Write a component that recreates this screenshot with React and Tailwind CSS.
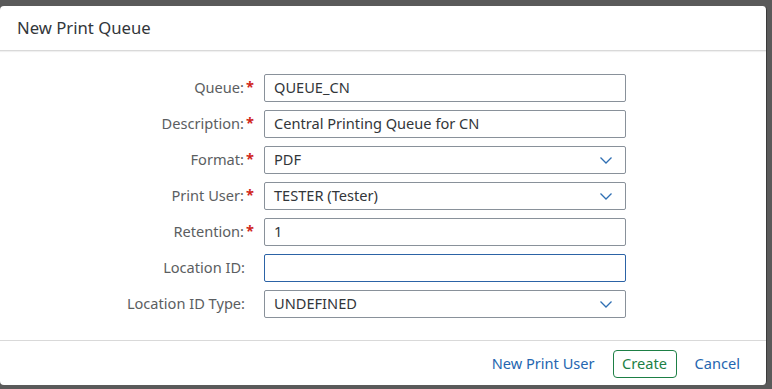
import React from "react";

function Chevron() {
  return (
    <svg width="14" height="10" viewBox="0 0 14 10" className="shrink-0">
      <path d="M1.5 2.5 L7 8 L12.5 2.5" fill="none" stroke="#2f6fb3" strokeWidth="1.3" />
    </svg>
  );
}

function Row({ label, req, value, select, focus }) {
  return (
    <div className="flex items-center h-[28px]">
      <div className="w-[264px] flex justify-end items-center pr-[10px]">
        <span className="text-[#5b5e61]">{label}</span>
        {req ? (
          <span className="text-[#d0271d] font-bold w-[9px] text-right leading-none ml-[1px] -mt-[3px]">*</span>
        ) : (
          <span className="w-[9px]" />
        )}
      </div>
      <div
        className={
          "w-[362px] h-[28px] rounded-[2px] border flex items-center pl-[9px] pr-[12px] bg-white " +
          (focus ? "border-[#2c63a6]" : "border-[#89919a]")
        }
      >
        <span className="flex-1 text-[#32363a]">{value}</span>
        {select && <Chevron />}
      </div>
    </div>
  );
}

export default function App() {
  return (
    <div
      className="w-[772px] h-[389px] bg-[#5a5a5a] overflow-hidden pt-[6px] text-[14.6px]"
      style={{ fontFamily: '"Noto Sans", "Open Sans", sans-serif' }}
    >
      <div className="w-[767px] h-[379px] bg-white rounded-[4px] border-r border-[#3a3a3a] flex flex-col">
        <div className="h-[45px] border-b border-[#d9d9d9] shadow-[0_1px_1px_rgba(0,0,0,0.06)] flex items-center pl-[17px]">
          <span className="text-[16.7px] text-[#32363a]">New Print Queue</span>
        </div>
        <div className="flex-1 pt-[23px] flex flex-col gap-[8px]">
          <Row label="Queue:" req value="QUEUE_CN" />
          <Row label="Description:" req value="Central Printing Queue for CN" />
          <Row label="Format:" req value="PDF" select />
          <Row label="Print User:" req value="TESTER (Tester)" select />
          <Row label="Retention:" req value="1" />
          <Row label="Location ID:" value="" focus />
          <Row label="Location ID Type:" value="UNDEFINED" select />
        </div>
        <div className="h-[45px] border-t border-[#d9d9d9] flex items-center justify-end pr-[26px] pt-[1px]">
          <span className="text-[#2566b0] mr-[18px]">New Print User</span>
          <div className="h-[28px] w-[64px] border border-[#1d7f45] rounded-[4px] flex items-center justify-center text-[#1d7f45] mr-[18px]">
            Create
          </div>
          <span className="text-[#2566b0]">Cancel</span>
        </div>
      </div>
    </div>
  );
}
